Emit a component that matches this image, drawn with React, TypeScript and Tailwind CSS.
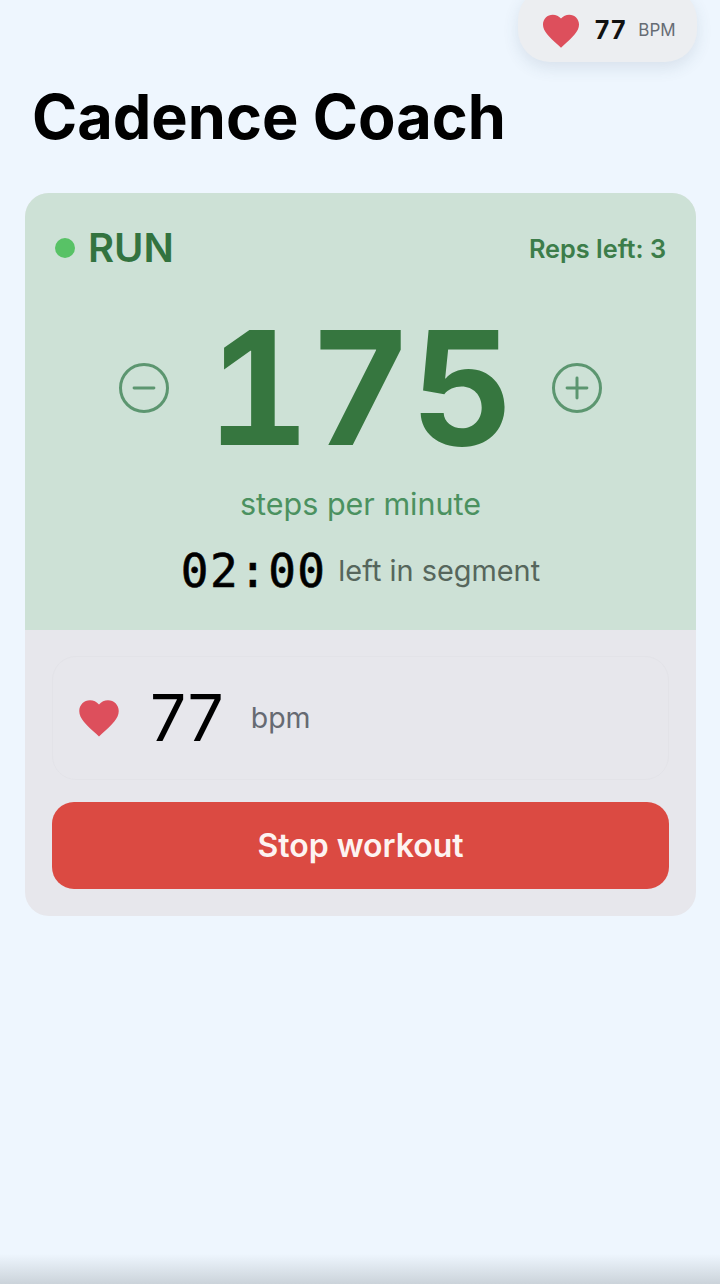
import { Minus, Plus } from "lucide-react";

function Heart({ className }: { className: string }) {
  return (
    <svg viewBox="0 0 24 24" className={className} fill="currentColor">
      <path d="M12 21.6 10.5 20.2C5.2 15.4 1.7 12.2 1.7 8.3 1.7 5.1 4.2 2.7 7.3 2.7c1.8 0 3.5.8 4.7 2.2 1.2-1.4 2.9-2.2 4.7-2.2 3.1 0 5.6 2.4 5.6 5.6 0 3.9-3.5 7.1-8.8 11.9z" />
    </svg>
  );
}

export default function App() {
  return (
    <div className="relative h-[1284px] overflow-hidden bg-[#eef6fe] font-['Inter',sans-serif]">
      {/* Floating BPM pill */}
      <div className="absolute right-[23px] top-[-12px] flex h-[74px] w-[179px] items-center rounded-[32px] bg-[#eceef1] pl-[22px] pt-[12px] shadow-[0_6px_16px_rgba(60,80,110,0.12)]">
        <Heart className="h-[42px] w-[42px] text-[#dd4f5c]" />
        <span className="ml-[12px] text-[25px] font-bold tabular-nums text-[#111]">77</span>
        <span className="ml-[12px] text-[17px] text-[#666c74]">BPM</span>
      </div>

      <div className="pl-[25px] pr-[24px] pt-[79px]">
        <h1 className="pl-[7px] text-[61.2px] font-bold leading-[76px] text-black">Cadence Coach</h1>

        <div className="mt-[38px] overflow-hidden rounded-[24px] bg-[#e7e7ec]">
          {/* Current segment */}
          <div className="h-[437px] bg-[#cde1d6] px-[30px] pt-[30px]">
            <div className="flex items-center justify-between">
              <div className="flex items-center gap-[13px]">
                <span className="h-[20px] w-[20px] rounded-full bg-[#58c266]" />
                <span className="text-[40px] font-semibold leading-[50px] text-[#33733f]">RUN</span>
              </div>
              <span className="pt-[2px] text-[25.3px] font-semibold text-[#3c7d4a]">Reps left: 3</span>
            </div>

            <div className="mt-[18px] flex items-center justify-center gap-[38px]">
              <button className="flex h-[50px] w-[50px] items-center justify-center rounded-full border-[3px] border-[#5c9670] text-[#5c9670]">
                <Minus size={34} strokeWidth={2.1} />
              </button>
              <span className="text-[158px] font-bold leading-[194px] tabular-nums text-[#36763f]">175</span>
              <button className="flex h-[50px] w-[50px] items-center justify-center rounded-full border-[3px] border-[#5c9670] text-[#5c9670]">
                <Plus size={34} strokeWidth={2.1} />
              </button>
            </div>

            <p className="text-center text-[30.5px] leading-[38px] text-[#4b9160]">steps per minute</p>

            <div className="mt-[21px] flex items-center justify-center gap-[12px]">
              <span className="font-['DejaVu_Sans_Mono',monospace] text-[46px] leading-[54px] tracking-[1.4px] text-black [-webkit-text-stroke:0.6px_black]">02:00</span>
              <span className="text-[28.9px] leading-[40px] text-[#56665c]">left in segment</span>
            </div>
          </div>

          {/* Heart rate and stop */}
          <div className="px-[27px] pb-[27px] pt-[26px]">
            <div className="flex h-[124px] items-center rounded-[24px] border border-[#e3e3e8] pl-[23px]">
              <Heart className="h-[46px] w-[46px] text-[#dd4f5c]" />
              <span className="ml-[28px] text-[64px] text-black">77</span>
              <span className="ml-[27px] text-[28.5px] text-[#666a72]">bpm</span>
            </div>
            <button className="mt-[22px] h-[87px] w-full rounded-[22px] bg-[#db4a42] text-[32px] font-semibold text-[#fdf3f1]">
              Stop workout
            </button>
          </div>
        </div>
      </div>

      <div className="absolute inset-x-0 bottom-0 h-[30px] bg-gradient-to-b from-transparent to-[#cbd3da]" />
    </div>
  );
}
